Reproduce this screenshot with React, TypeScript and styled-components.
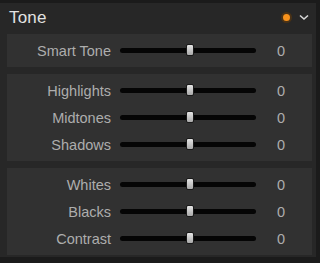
import React from 'react';
import styled, { createGlobalStyle } from 'styled-components';

const GlobalStyle = createGlobalStyle`
  html, body {
    margin: 0;
    padding: 0;
    background: #1b1b1b;
  }
  * { box-sizing: border-box; }
`;

const Panel = styled.div`
  width: 316px;
  height: 254px;
  margin-top: 3px;
  background: #272727;
  font-family: 'Liberation Sans', Arial, sans-serif;
  padding: 0 4px 0 7px;
  display: flex;
  flex-direction: column;
  overflow: hidden;
`;

const Header = styled.div`
  flex-shrink: 0;
  height: 31px;
  display: flex;
  align-items: center;
  justify-content: space-between;
  padding: 0 0 2px 2px;
`;

const Title = styled.div`
  font-size: 17px;
  color: #e2e2e2;
  letter-spacing: 0.2px;
`;

const HeaderIcons = styled.div`
  display: flex;
  align-items: center;
  gap: 7px;
  padding-right: 3px;
`;

const Dot = styled.span`
  width: 11px;
  height: 11px;
  border-radius: 50%;
  background: #f7921c;
  border: 2px solid #4a3216;
`;

const Group = styled.div`
  flex-shrink: 0;
  background: #313131;
  padding: 3px 0;
  margin-bottom: 7px;
  display: flex;
  flex-direction: column;
  &:last-child {
    margin-bottom: 0;
  }
`;

const Row = styled.div`
  height: 27px;
  display: flex;
  align-items: center;
`;

const Label = styled.div`
  width: 104px;
  text-align: right;
  font-size: 14.5px;
  color: #adadad;
`;

const Track = styled.div`
  position: relative;
  margin-left: 9px;
  width: 136px;
  height: 5px;
  border-radius: 3px;
  background: #050505;
`;

const Thumb = styled.div`
  position: absolute;
  left: 66px;
  top: -4px;
  width: 8px;
  height: 12px;
  border-radius: 2px;
  background: linear-gradient(#e4e4e4, #a9a9a9);
  border: 1px solid #1a1a1a;
`;

const Value = styled.div`
  width: 50px;
  text-align: center;
  font-size: 14.5px;
  color: #adadad;
`;

const SliderRow = ({ label }: { label: string }) => (
  <Row>
    <Label>{label}</Label>
    <Track>
      <Thumb />
    </Track>
    <Value>0</Value>
  </Row>
);

const groups = [
  ['Smart Tone'],
  ['Highlights', 'Midtones', 'Shadows'],
  ['Whites', 'Blacks', 'Contrast'],
];

export default function App() {
  return (
    <>
      <GlobalStyle />
      <Panel>
        <Header>
          <Title>Tone</Title>
          <HeaderIcons>
            <Dot />
            <svg width="10" height="7" viewBox="0 0 10 7">
              <path d="M1 1.5 L5 5 L9 1.5" fill="none" stroke="#d8d8d8" strokeWidth="1.6" />
            </svg>
          </HeaderIcons>
        </Header>
        {groups.map((g, i) => (
          <Group key={i}>
            {g.map((l) => (
              <SliderRow key={l} label={l} />
            ))}
          </Group>
        ))}
      </Panel>
    </>
  );
}
